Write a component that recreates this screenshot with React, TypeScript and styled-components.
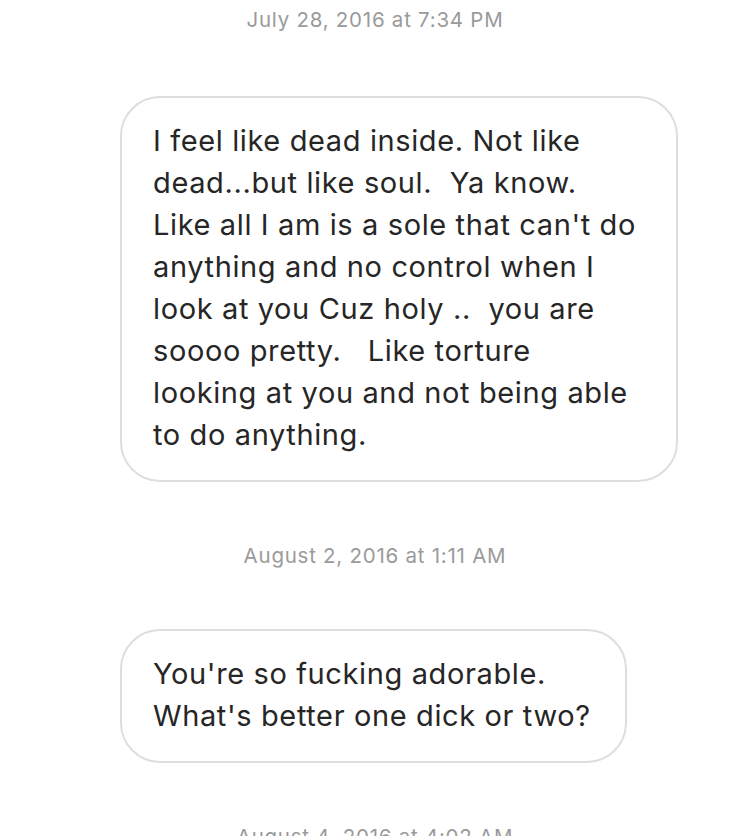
import React from "react";
import styled, { createGlobalStyle } from "styled-components";

const Global = createGlobalStyle`
  html, body { margin: 0; padding: 0; background: #ffffff; }
  body { font-family: Inter, "Noto Sans", sans-serif; -webkit-font-smoothing: antialiased; }
`;

const Thread = styled.div`
  display: flex;
  flex-direction: column;
  align-items: flex-start;
  padding: 8px 0 0 120px;
  width: 750px;
  height: 836px;
  box-sizing: border-box;
  overflow: hidden;
`;

const Stamp = styled.div<{ $gap: number }>`
  align-self: stretch;
  margin-left: -120px;
  text-align: center;
  font-size: 20.5px;
  letter-spacing: 0.75px;
  line-height: 24px;
  color: #9a9a9a;
  margin-bottom: ${(p) => p.$gap}px;
`;

const Bubble = styled.div<{ $w: number }>`
  width: ${(p) => p.$w}px;
  box-sizing: border-box;
  border: 2px solid #dedede;
  border-radius: 40px;
  padding: 22px 20px 24px 31px;
  font-size: 29px;
  letter-spacing: 0.62px;
  line-height: 42px;
  color: #262626;
  margin-bottom: 62px;
`;

const Line = styled.div`
  white-space: pre;
`;

const threads = [
  {
    ts: "July 28, 2016 at 7:34 PM",
    gap: 64,
    w: 558,
    lines: [
      "I feel like dead inside. Not like",
      "dead...but like soul.  Ya know.",
      "Like all I am is a sole that can't do",
      "anything and no control when I",
      "look at you Cuz holy ..  you are",
      "soooo pretty.   Like torture",
      "looking at you and not being able",
      "to do anything.",
    ],
  },
  {
    ts: "August 2, 2016 at 1:11 AM",
    gap: 61,
    w: 507,
    lines: ["You're so fucking adorable.", "What's better one dick or two?"],
  },
];

export default function App() {
  return (
    <>
      <Global />
      <Thread>
        {threads.map((t) => (
          <React.Fragment key={t.ts}>
            <Stamp $gap={t.gap}>{t.ts}</Stamp>
            <Bubble $w={t.w}>
              {t.lines.map((l, i) => (
                <Line key={i}>{l}</Line>
              ))}
            </Bubble>
          </React.Fragment>
        ))}
        <Stamp $gap={0}>August 4, 2016 at 4:02 AM</Stamp>
      </Thread>
    </>
  );
}
